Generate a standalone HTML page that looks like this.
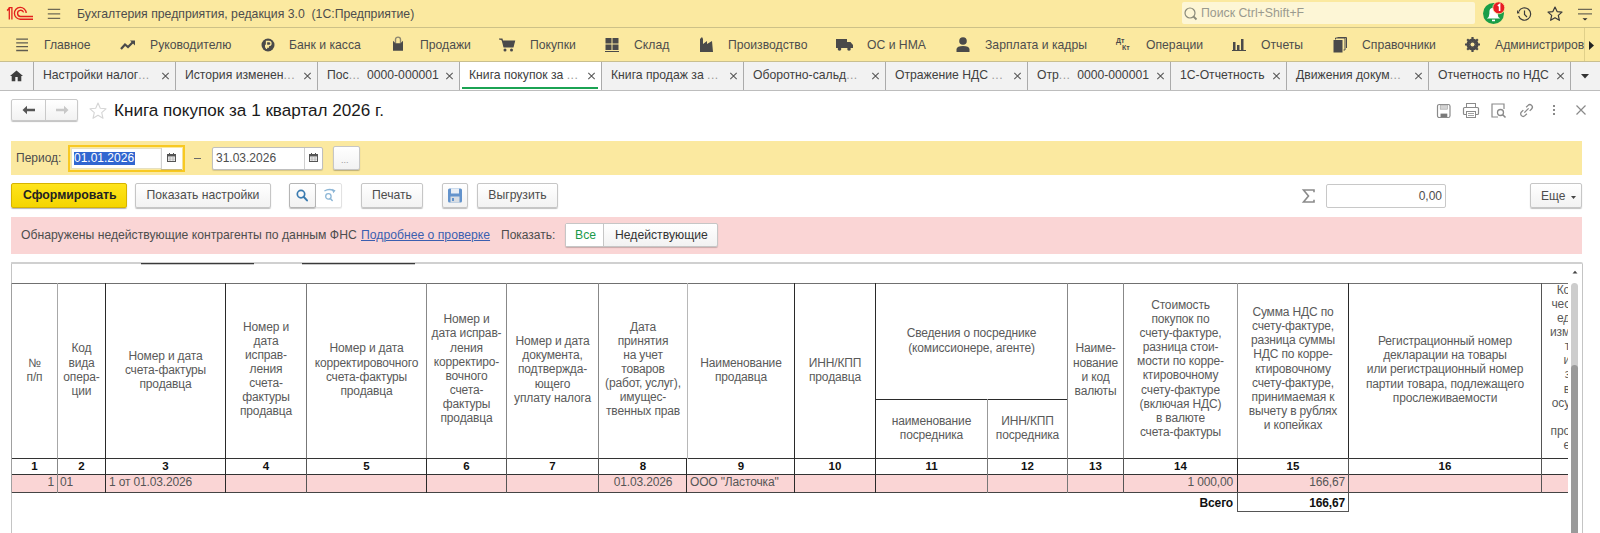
<!DOCTYPE html><html><head><meta charset="utf-8"><title>1C</title><style>
*{margin:0;padding:0;box-sizing:border-box}
html,body{width:1600px;height:533px;overflow:hidden;background:#fff;font-family:"Liberation Sans",sans-serif;color:#4d4d4d;font-size:12px}
.a{position:absolute;white-space:nowrap}
.t{position:absolute;white-space:nowrap;line-height:14px}
svg{position:absolute;overflow:visible}
.btn{position:absolute;border:1px solid #c6c6c6;border-radius:2px;background:linear-gradient(#fff,#f2f2f2);box-shadow:0 1px 1px rgba(0,0,0,.25)}
.hl{position:absolute;height:1px}
.vl{position:absolute;width:1px}
.ht{position:absolute;text-align:center;font-size:12px;letter-spacing:-0.15px;line-height:14.12px;color:#5a5a5a;white-space:nowrap}
.num{position:absolute;text-align:center;font-size:11.5px;font-weight:bold;color:#111;line-height:14px}
.dt{position:absolute;font-size:12px;letter-spacing:-0.15px;color:#555;line-height:14px;white-space:nowrap}
</style></head><body>
<div class="a" style="left:0;top:0;width:1600px;height:27px;background:#FBE9A0"></div>
<div class="a" style="left:0;top:27px;width:1600px;height:1px;background:#cdc187"></div>
<svg style="left:0;top:0" width="40" height="27" viewBox="0 0 40 27">
<path d="M7.2 10.6 L9.4 8.2" stroke="#e3211c" stroke-width="1.6" fill="none"/>
<path d="M9.3 19.6 L9.3 7.6 L11.9 7.6 L11.9 19.6" stroke="#e3211c" stroke-width="1.3" fill="none"/>
<path d="M26.2 13 A5.9 5.9 0 1 0 20.5 19.2 L33 19.2" stroke="#e3211c" stroke-width="1.35" fill="none"/>
<path d="M23.6 12.4 A3.1 3.1 0 1 0 20.5 16.5 L33 16.5" stroke="#e3211c" stroke-width="1.35" fill="none"/>
</svg>
<svg style="left:47px;top:0" width="14" height="27" viewBox="0 0 14 27"><path d="M0.8 9.4 L13.2 9.4 M0.8 13.9 L13.2 13.9 M0.8 18.4 L13.2 18.4" stroke="#6f6a55" stroke-width="1.3"/></svg>
<div class="a" style="left:77px;top:7px;font-size:12.25px;line-height:15px;color:#4d4d4d">Бухгалтерия предприятия, редакция 3.0&nbsp;&nbsp;(1С:Предприятие)</div>
<div class="a" style="left:1182px;top:2px;width:293px;height:22px;background:#fdf6d6;border-radius:2px"></div>
<svg style="left:1184px;top:7px" width="14" height="14" viewBox="0 0 14 14"><circle cx="6" cy="6" r="5" stroke="#8a8a7a" stroke-width="1.2" fill="none"/><path d="M9.5 9.5 L12.5 12.5" stroke="#8a8a7a" stroke-width="1.8"/></svg>
<div class="a" style="left:1201px;top:6px;font-size:12.3px;line-height:15px;color:#9a9a8e">Поиск Ctrl+Shift+F</div>
<svg style="left:1482px;top:1px" width="26" height="26" viewBox="0 0 26 26">
<circle cx="11.5" cy="12.5" r="10.5" fill="#1a9e48"/>
<path d="M4.8 17.6 L18.2 17.6 Q15.6 16 15.6 12.5 L15.6 10.8 A4.1 4.1 0 0 0 7.4 10.8 L7.4 12.5 Q7.4 16 4.8 17.6 Z" fill="#fff"/>
<rect x="10" y="18.6" width="3" height="1.6" fill="#fff"/>
<circle cx="16.8" cy="6.8" r="6" fill="#e81c24" stroke="#fbe9a0" stroke-width="0.8"/>
<path d="M15.8 4.8 L17.6 3.6 L17.6 10" stroke="#fff" stroke-width="1.6" fill="none"/>
</svg>
<svg style="left:1516px;top:6px" width="16" height="16" viewBox="0 0 16 16">
<path d="M2.8 5.5 A6.2 6.2 0 1 1 2.6 10" stroke="#3a3a3a" stroke-width="1.2" fill="none"/>
<path d="M1.2 4 L3.8 7.2 L1.0 7.5 Z" fill="#3a3a3a"/>
<path d="M8.5 4.5 L8.5 8.5 L11 11" stroke="#3a3a3a" stroke-width="1.2" fill="none"/>
</svg>
<svg style="left:1547px;top:6px" width="16" height="16" viewBox="0 0 16 16">
<path d="M8 1 L10.1 5.6 L15 6.1 L11.3 9.4 L12.4 14.3 L8 11.7 L3.6 14.3 L4.7 9.4 L1 6.1 L5.9 5.6 Z" stroke="#3a3a3a" stroke-width="1.2" fill="none" stroke-linejoin="round"/>
</svg>
<svg style="left:1577px;top:6px" width="16" height="16" viewBox="0 0 16 16"><path d="M1 3.3 L15 3.3 M1 7.9 L15 7.9" stroke="#6f6a55" stroke-width="1.3"/><path d="M5.5 12.2 L10.5 12.2 L8 14.6 Z" fill="#2a2a2a"/></svg>
<div class="a" style="left:0;top:28px;width:1600px;height:33px;background:#FBE9A0"></div>
<div class="a" style="left:44px;top:37.5px;font-size:12.2px;line-height:15px;color:#4d4d4d">Главное</div>
<div class="a" style="left:150px;top:37.5px;font-size:12.2px;line-height:15px;color:#4d4d4d">Руководителю</div>
<div class="a" style="left:289px;top:37.5px;font-size:12.2px;line-height:15px;color:#4d4d4d">Банк и касса</div>
<div class="a" style="left:420px;top:37.5px;font-size:12.2px;line-height:15px;color:#4d4d4d">Продажи</div>
<div class="a" style="left:530px;top:37.5px;font-size:12.2px;line-height:15px;color:#4d4d4d">Покупки</div>
<div class="a" style="left:634px;top:37.5px;font-size:12.2px;line-height:15px;color:#4d4d4d">Склад</div>
<div class="a" style="left:728px;top:37.5px;font-size:12.2px;line-height:15px;color:#4d4d4d">Производство</div>
<div class="a" style="left:867px;top:37.5px;font-size:12.2px;line-height:15px;color:#4d4d4d">ОС и НМА</div>
<div class="a" style="left:985px;top:37.5px;font-size:12.2px;line-height:15px;color:#4d4d4d">Зарплата и кадры</div>
<div class="a" style="left:1146px;top:37.5px;font-size:12.2px;line-height:15px;color:#4d4d4d">Операции</div>
<div class="a" style="left:1261px;top:37.5px;font-size:12.2px;line-height:15px;color:#4d4d4d">Отчеты</div>
<div class="a" style="left:1362px;top:37.5px;font-size:12.2px;line-height:15px;color:#4d4d4d">Справочники</div>
<div class="a" style="left:1495px;top:37.5px;font-size:12.2px;line-height:15px;color:#4d4d4d">Администриров</div>
<svg style="left:16px;top:36px" width="13" height="17" viewBox="0 0 13 17"><path d="M0.2 3.2 L12 3.2 M0.2 6.9 L12 6.9 M0.2 10.6 L12 10.6 M0.2 14.5 L12 14.5" stroke="#5f5c50" stroke-width="1.3"/></svg>
<svg style="left:120px;top:40px" width="16" height="10" viewBox="0 0 16 10"><path d="M1 9 L5 4.5 L8 7 L13 2" stroke="#4a4a4a" stroke-width="2.2" fill="none"/><path d="M10 0.5 L15 0.5 L15 5.5 Z" fill="#4a4a4a"/></svg>
<svg style="left:261px;top:38px" width="14" height="14" viewBox="0 0 14 14"><circle cx="7" cy="7" r="6.5" fill="#4a4a4a"/><path d="M5.5 11 L5.5 3.5 L8 3.5 A2 2 0 0 1 8 7.5 L4 7.5 M4 9 L8 9" stroke="#FBE9A0" stroke-width="1.3" fill="none"/></svg>
<svg style="left:392px;top:36px" width="12" height="16" viewBox="0 0 12 16"><path d="M3.5 7.5 L3.5 3.6 A2.5 2.5 0 0 1 8.5 3.6 L8.5 7.5" stroke="#8c8670" stroke-width="1.4" fill="none"/><path d="M1 4.8 L3.5 7.3 L8.5 7.3 L11 4.8 L11 14.7 L1 14.7 Z" fill="#4a4a4a"/></svg>
<svg style="left:499px;top:38px" width="16" height="14" viewBox="0 0 16 14"><path d="M0 1 L3 1 L5 9 L14 9 L15.5 3 L4 3" fill="#4a4a4a" stroke="#4a4a4a" stroke-width="1.2"/><circle cx="6" cy="12" r="1.5" fill="#4a4a4a"/><circle cx="12.5" cy="12" r="1.5" fill="#4a4a4a"/></svg>
<svg style="left:605px;top:38px" width="14" height="14" viewBox="0 0 14 14"><rect x="0.5" y="0" width="6" height="5.5" fill="#4a4a4a"/><rect x="7.5" y="0" width="6" height="5.5" fill="#4a4a4a"/><rect x="0.5" y="6.5" width="6" height="5.5" fill="#4a4a4a"/><rect x="7.5" y="6.5" width="6" height="5.5" fill="#4a4a4a"/><rect x="0" y="13" width="14" height="1" fill="#4a4a4a"/></svg>
<svg style="left:700px;top:37px" width="13" height="15" viewBox="0 0 13 15"><path d="M0 15 L0 2 L2 0 L3 2 L3 7 L7 4 L7 7 L12 4 L13 15 Z" fill="#4a4a4a"/></svg>
<svg style="left:836px;top:39px" width="17" height="12" viewBox="0 0 17 12"><rect x="0" y="0" width="11" height="9" fill="#4a4a4a"/><path d="M11 3 L14.5 3 L17 6 L17 9 L11 9 Z" fill="#4a4a4a"/><circle cx="3.5" cy="10" r="1.8" fill="#4a4a4a"/><circle cx="13" cy="10" r="1.8" fill="#4a4a4a"/></svg>
<svg style="left:956px;top:37px" width="14" height="15" viewBox="0 0 14 15"><circle cx="7" cy="4" r="3.8" fill="#4a4a4a"/><path d="M0.5 15 L0.5 12 Q1 9 7 9 Q13 9 13.5 12 L13.5 15 Z" fill="#4a4a4a"/></svg>
<div class="a" style="left:1116px;top:37px;font-size:7px;line-height:7px;font-weight:bold;color:#4a4a4a">Дт</div><div class="a" style="left:1122px;top:44px;font-size:7px;line-height:7px;font-weight:bold;color:#4a4a4a">Кт</div>
<svg style="left:1232px;top:39px" width="14" height="12" viewBox="0 0 14 12"><rect x="1" y="3" width="2.5" height="8" fill="#4a4a4a"/><rect x="5" y="6" width="2.5" height="5" fill="#4a4a4a"/><rect x="9" y="0" width="2.5" height="11" fill="#4a4a4a"/><rect x="0" y="11" width="14" height="1" fill="#4a4a4a"/></svg>
<svg style="left:1333px;top:37px" width="14" height="16" viewBox="0 0 14 16"><rect x="0.5" y="3" width="9" height="12.5" fill="#4a4a4a"/><path d="M2.5 2.5 L2.5 1 L12 1 L12 13 L10.5 13" stroke="#4a4a4a" stroke-width="1" fill="none"/><path d="M4.5 0.5 L13.5 0.5 L13.5 11" stroke="#4a4a4a" stroke-width="1" fill="none"/></svg>
<svg style="left:1465px;top:37px" width="15" height="15" viewBox="0 0 15 15"><circle cx="7.5" cy="7.5" r="4.5" stroke="#4a4a4a" stroke-width="3" fill="none"/><path d="M7.5 0 L7.5 15 M0 7.5 L15 7.5 M2.2 2.2 L12.8 12.8 M12.8 2.2 L2.2 12.8" stroke="#4a4a4a" stroke-width="2.2"/><circle cx="7.5" cy="7.5" r="2" fill="#FBE9A0"/></svg>
<div class="a" style="left:1584px;top:28px;width:1px;height:33px;background:#e0d08a"></div>
<svg style="left:1589px;top:41px" width="6" height="9" viewBox="0 0 6 9"><path d="M0 0 L5 4.5 L0 9 Z" fill="#222"/></svg>
<div class="a" style="left:0;top:61px;width:1600px;height:29px;background:#f2f2f2"></div>
<div class="a" style="left:0;top:61px;width:1600px;height:1px;background:#c9bf8f"></div>
<div class="a" style="left:0;top:90px;width:1600px;height:1px;background:#bdbdbd"></div>
<div class="a" style="left:459px;top:62px;width:142px;height:28px;background:#fff"></div>
<div class="a" style="left:462px;top:87px;width:136px;height:2px;background:#1ba353"></div>
<div class="a" style="left:33px;top:62px;width:1px;height:28px;background:#ababab"></div>
<div class="a" style="left:175px;top:62px;width:1px;height:28px;background:#ababab"></div>
<div class="a" style="left:317px;top:62px;width:1px;height:28px;background:#ababab"></div>
<div class="a" style="left:459px;top:62px;width:1px;height:28px;background:#ababab"></div>
<div class="a" style="left:601px;top:62px;width:1px;height:28px;background:#ababab"></div>
<div class="a" style="left:743px;top:62px;width:1px;height:28px;background:#ababab"></div>
<div class="a" style="left:885px;top:62px;width:1px;height:28px;background:#ababab"></div>
<div class="a" style="left:1027px;top:62px;width:1px;height:28px;background:#ababab"></div>
<div class="a" style="left:1170px;top:62px;width:1px;height:28px;background:#ababab"></div>
<div class="a" style="left:1286px;top:62px;width:1px;height:28px;background:#ababab"></div>
<div class="a" style="left:1428px;top:62px;width:1px;height:28px;background:#ababab"></div>
<div class="a" style="left:1570px;top:62px;width:1px;height:28px;background:#ababab"></div>
<div class="a" style="left:43px;top:68px;font-size:12.2px;line-height:15px;color:#404040">Настройки налог<span style="letter-spacing:0.45px;color:#9a9a9a">...</span></div>
<svg style="left:161px;top:72px" width="8" height="8" viewBox="0 0 8 8"><path d="M1.3 0.9 L7.7 7.1 M7.7 0.9 L1.3 7.1" stroke="#5a5a5a" stroke-width="1.1"/></svg>
<div class="a" style="left:185px;top:68px;font-size:12.2px;line-height:15px;color:#404040">История изменен<span style="letter-spacing:0.45px;color:#9a9a9a">...</span></div>
<svg style="left:303px;top:72px" width="8" height="8" viewBox="0 0 8 8"><path d="M1.3 0.9 L7.7 7.1 M7.7 0.9 L1.3 7.1" stroke="#5a5a5a" stroke-width="1.1"/></svg>
<div class="a" style="left:327px;top:68px;font-size:12.2px;line-height:15px;color:#404040">Пос<span style="letter-spacing:0.45px;color:#9a9a9a">...</span>&nbsp;&nbsp;0000-000001</div>
<svg style="left:445px;top:72px" width="8" height="8" viewBox="0 0 8 8"><path d="M1.3 0.9 L7.7 7.1 M7.7 0.9 L1.3 7.1" stroke="#5a5a5a" stroke-width="1.1"/></svg>
<div class="a" style="left:469px;top:68px;font-size:12.2px;line-height:15px;color:#404040">Книга покупок за <span style="letter-spacing:0.45px;color:#9a9a9a">...</span></div>
<svg style="left:587px;top:72px" width="8" height="8" viewBox="0 0 8 8"><path d="M1.3 0.9 L7.7 7.1 M7.7 0.9 L1.3 7.1" stroke="#5a5a5a" stroke-width="1.1"/></svg>
<div class="a" style="left:611px;top:68px;font-size:12.2px;line-height:15px;color:#404040">Книга продаж за <span style="letter-spacing:0.45px;color:#9a9a9a">...</span></div>
<svg style="left:729px;top:72px" width="8" height="8" viewBox="0 0 8 8"><path d="M1.3 0.9 L7.7 7.1 M7.7 0.9 L1.3 7.1" stroke="#5a5a5a" stroke-width="1.1"/></svg>
<div class="a" style="left:753px;top:68px;font-size:12.2px;line-height:15px;color:#404040">Оборотно-сальд<span style="letter-spacing:0.45px;color:#9a9a9a">...</span></div>
<svg style="left:871px;top:72px" width="8" height="8" viewBox="0 0 8 8"><path d="M1.3 0.9 L7.7 7.1 M7.7 0.9 L1.3 7.1" stroke="#5a5a5a" stroke-width="1.1"/></svg>
<div class="a" style="left:895px;top:68px;font-size:12.2px;line-height:15px;color:#404040">Отражение НДС <span style="letter-spacing:0.45px;color:#9a9a9a">...</span></div>
<svg style="left:1013px;top:72px" width="8" height="8" viewBox="0 0 8 8"><path d="M1.3 0.9 L7.7 7.1 M7.7 0.9 L1.3 7.1" stroke="#5a5a5a" stroke-width="1.1"/></svg>
<div class="a" style="left:1037px;top:68px;font-size:12.2px;line-height:15px;color:#404040">Отр<span style="letter-spacing:0.45px;color:#9a9a9a">...</span>&nbsp;&nbsp;0000-000001</div>
<svg style="left:1156px;top:72px" width="8" height="8" viewBox="0 0 8 8"><path d="M1.3 0.9 L7.7 7.1 M7.7 0.9 L1.3 7.1" stroke="#5a5a5a" stroke-width="1.1"/></svg>
<div class="a" style="left:1180px;top:68px;font-size:12.2px;line-height:15px;color:#404040">1С-Отчетность</div>
<svg style="left:1272px;top:72px" width="8" height="8" viewBox="0 0 8 8"><path d="M1.3 0.9 L7.7 7.1 M7.7 0.9 L1.3 7.1" stroke="#5a5a5a" stroke-width="1.1"/></svg>
<div class="a" style="left:1296px;top:68px;font-size:12.2px;line-height:15px;color:#404040">Движения докум<span style="letter-spacing:0.45px;color:#9a9a9a">...</span></div>
<svg style="left:1414px;top:72px" width="8" height="8" viewBox="0 0 8 8"><path d="M1.3 0.9 L7.7 7.1 M7.7 0.9 L1.3 7.1" stroke="#5a5a5a" stroke-width="1.1"/></svg>
<div class="a" style="left:1438px;top:68px;font-size:12.2px;line-height:15px;color:#404040">Отчетность по НДС</div>
<svg style="left:1556px;top:72px" width="8" height="8" viewBox="0 0 8 8"><path d="M1.3 0.9 L7.7 7.1 M7.7 0.9 L1.3 7.1" stroke="#5a5a5a" stroke-width="1.1"/></svg>
<svg style="left:9.5px;top:70px" width="13" height="12" viewBox="0 0 13 12"><path d="M6.5 0.5 L13 5.9 L11.3 5.9 L11.3 11.3 L7.7 11.3 L7.7 7 L5.3 7 L5.3 11.3 L1.7 11.3 L1.7 5.9 L0 5.9 Z" fill="#3f3f3f"/></svg>
<svg style="left:1581px;top:74px" width="8" height="5" viewBox="0 0 8 5"><path d="M0 0 L8 0 L4 4.5 Z" fill="#333"/></svg>
<div class="btn" style="left:11px;top:99px;width:67px;height:22px;border-color:#c9c9c9"></div>
<div class="a" style="left:45px;top:100px;width:1px;height:20px;background:#c9c9c9"></div>
<svg style="left:22px;top:105px" width="14" height="10" viewBox="0 0 14 10"><path d="M0.5 5 L5 0.8 L5 3.8 L13 3.8 L13 6.2 L5 6.2 L5 9.2 Z" fill="#555"/></svg>
<svg style="left:55px;top:105px" width="14" height="10" viewBox="0 0 14 10"><path d="M13.5 5 L9 0.8 L9 3.8 L1 3.8 L1 6.2 L9 6.2 L9 9.2 Z" fill="#c8c8c8"/></svg>
<svg style="left:89px;top:102px" width="18" height="18" viewBox="0 0 18 18"><path d="M9 1 L11.3 6.3 L17 6.8 L12.7 10.6 L14 16.3 L9 13.3 L4 16.3 L5.3 10.6 L1 6.8 L6.7 6.3 Z" stroke="#d5d5d5" stroke-width="1.1" fill="none" stroke-linejoin="round"/></svg>
<div class="a" style="left:114px;top:101px;font-size:17.1px;line-height:19px;color:#1a1a1a">Книга покупок за 1 квартал 2026 г.</div>
<svg style="left:1436px;top:103px" width="16" height="16" viewBox="0 0 16 16"><rect x="1.5" y="1.5" width="12.5" height="13" rx="1.8" stroke="#8a8a8a" stroke-width="1.2" fill="none"/><rect x="4.2" y="2" width="7.3" height="4.2" fill="#d4d4d4" stroke="#a0a0a0" stroke-width="0.6"/><rect x="4.5" y="10.6" width="6.8" height="3.4" fill="#7a7a7a"/></svg>
<svg style="left:1463px;top:103px" width="16" height="15" viewBox="0 0 16 15"><rect x="3.5" y="0.5" width="9" height="4" stroke="#8a8a8a" stroke-width="1" fill="none"/><rect x="0.5" y="4.5" width="15" height="7" rx="1" stroke="#8a8a8a" stroke-width="1.2" fill="none"/><rect x="3.5" y="8.5" width="9" height="6" stroke="#8a8a8a" stroke-width="1" fill="#fff"/><path d="M5 10.5 L11 10.5 M5 12.5 L11 12.5" stroke="#8a8a8a" stroke-width="0.8"/></svg>
<svg style="left:1491px;top:103px" width="16" height="15" viewBox="0 0 16 15"><path d="M7 14 L1 14 L1 1 L13 1 L13 6" stroke="#8a8a8a" stroke-width="1.2" fill="none"/><circle cx="9.5" cy="9.5" r="3" stroke="#8a8a8a" stroke-width="1.3" fill="none"/><path d="M11.7 11.7 L14.5 14.5" stroke="#8a8a8a" stroke-width="1.6"/></svg>
<svg style="left:1518px;top:102px" width="17" height="17" viewBox="0 0 17 17"><g transform="rotate(-45 8.5 8.5)"><path d="M6.5 6 L3.8 6 A2.5 2.5 0 0 0 3.8 11 L6.5 11" stroke="#8a8a8a" stroke-width="1.3" fill="none"/><path d="M10.5 6 L13.2 6 A2.5 2.5 0 0 1 13.2 11 L10.5 11" stroke="#8a8a8a" stroke-width="1.3" fill="none"/><path d="M5.5 8.5 L11.5 8.5" stroke="#8a8a8a" stroke-width="1.3"/></g></svg>
<div class="a" style="left:1553px;top:105px;width:2px;height:2px;background:#8a8a8a"></div><div class="a" style="left:1553px;top:109px;width:2px;height:2px;background:#8a8a8a"></div><div class="a" style="left:1553px;top:113px;width:2px;height:2px;background:#8a8a8a"></div>
<svg style="left:1576px;top:105px" width="10" height="10" viewBox="0 0 10 10"><path d="M0.5 0.5 L9.5 9.5 M9.5 0.5 L0.5 9.5" stroke="#8a8a8a" stroke-width="1.2"/></svg>
<div class="a" style="left:11px;top:141px;width:1571px;height:34px;background:#FBE9A0"></div>
<div class="a" style="left:16px;top:151px;font-size:12px;line-height:15px;color:#4d4d4d">Период:</div>
<div class="a" style="left:68px;top:145px;width:117px;height:27px;border:2px solid #f8c922;background:#fbe9a0"></div>
<div class="a" style="left:71px;top:148px;width:111px;height:21px;background:#fff;border:1px solid #e6e0c0"></div>
<div class="a" style="left:161px;top:148px;width:21px;height:21px;background:#fff;border-left:1px solid #d0d0d0;box-shadow:0 1px 1px rgba(0,0,0,.2)"></div>
<div class="a" style="left:74px;top:152px;width:61px;height:13px;background:#3166d0"></div>
<div class="a" style="left:74px;top:151px;font-size:12px;line-height:15px;color:#fff">01.01.2026</div>
<svg style="left:167px;top:153px" width="9" height="9" viewBox="0 0 9 9"><rect x="0.5" y="1.5" width="8" height="7" stroke="#555" stroke-width="1" fill="none"/><rect x="0.5" y="1.5" width="8" height="2" fill="#555"/><path d="M2.5 0 L2.5 2 M6.5 0 L6.5 2" stroke="#555" stroke-width="1"/><path d="M1 5 L8 5 M1 6.8 L8 6.8 M3 4 L3 8 M6 4 L6 8" stroke="#888" stroke-width="0.5"/></svg>
<div class="a" style="left:194px;top:158px;width:7px;height:1px;background:#6a6a6a"></div>
<div class="btn" style="left:212px;top:147px;width:111px;height:23px;background:#fff;border-color:#bfbfbf;box-shadow:0 1px 1px rgba(0,0,0,.15)"></div>
<div class="a" style="left:304px;top:148px;width:1px;height:21px;background:#cfcfcf"></div>
<div class="a" style="left:216px;top:151px;font-size:12px;line-height:15px;color:#4d4d4d">31.03.2026</div>
<svg style="left:309px;top:153px" width="9" height="9" viewBox="0 0 9 9"><rect x="0.5" y="1.5" width="8" height="7" stroke="#555" stroke-width="1" fill="none"/><rect x="0.5" y="1.5" width="8" height="2" fill="#555"/><path d="M2.5 0 L2.5 2 M6.5 0 L6.5 2" stroke="#555" stroke-width="1"/><path d="M1 5 L8 5 M1 6.8 L8 6.8 M3 4 L3 8 M6 4 L6 8" stroke="#888" stroke-width="0.5"/></svg>
<div class="btn" style="left:333px;top:146px;width:27px;height:24px"></div>
<div class="a" style="left:341px;top:155px;font-size:9px;line-height:10px;color:#999">...</div>
<div class="a" style="left:11px;top:183px;width:116px;height:25px;border:1px solid #d6b300;border-radius:2px;background:linear-gradient(#ffe41c,#f4d500);box-shadow:0 1px 1px rgba(0,0,0,.3)"></div>
<div class="a" style="left:23px;top:188px;font-size:12.3px;font-weight:bold;line-height:15px;color:#222">Сформировать</div>
<div class="btn" style="left:135px;top:183px;width:136px;height:25px"></div>
<div class="a" style="left:135px;top:188px;width:136px;text-align:center;font-size:12.2px;line-height:15px;color:#4d4d4d">Показать настройки</div>
<div class="btn" style="left:289px;top:183px;width:27px;height:25px;border-color:#b5b5b5"></div>
<div class="btn" style="left:315px;top:183px;width:27px;height:25px;border-color:#e2e2e2;box-shadow:0 1px 1px rgba(0,0,0,.08);background:#fff"></div>
<div class="a" style="left:315px;top:184px;width:1px;height:23px;background:#b5b5b5"></div>
<svg style="left:295px;top:188px" width="14" height="15" viewBox="0 0 14 15"><circle cx="6" cy="6.1" r="3.7" stroke="#3a7bb0" stroke-width="1.7" fill="none"/><path d="M8.6 8.8 L12 12.4" stroke="#3a7bb0" stroke-width="2" stroke-linecap="round"/></svg>
<svg style="left:322px;top:187px" width="16" height="16" viewBox="0 0 16 16"><circle cx="6.4" cy="9.4" r="2.7" stroke="#8cb6d6" stroke-width="1.3" fill="none"/><path d="M8.3 11.4 L10.2 13.4" stroke="#8cb6d6" stroke-width="1.5" stroke-linecap="round"/><path d="M2.4 4 Q7 1.2 11.5 3.6" stroke="#8cb6d6" stroke-width="1.3" fill="none"/><path d="M10 1.8 L13.6 3.4 L11.2 6.2 Z" fill="#8cb6d6"/></svg>
<div class="btn" style="left:361px;top:183px;width:62px;height:25px"></div>
<div class="a" style="left:361px;top:188px;width:62px;text-align:center;font-size:12.2px;line-height:15px;color:#4d4d4d">Печать</div>
<div class="btn" style="left:442px;top:183px;width:26px;height:25px"></div>
<svg style="left:448px;top:188px" width="14" height="15" viewBox="0 0 14 15"><rect x="0" y="0.5" width="14" height="14" rx="1.5" fill="#6393cc"/><rect x="3" y="0.5" width="8" height="5" fill="#e8eef5"/><rect x="2.5" y="8.5" width="9" height="6" fill="#d8dde3"/><rect x="4" y="10" width="2" height="3" fill="#6393cc"/></svg>
<div class="btn" style="left:477px;top:183px;width:81px;height:25px"></div>
<div class="a" style="left:477px;top:188px;width:81px;text-align:center;font-size:12.2px;line-height:15px;color:#4d4d4d">Выгрузить</div>
<svg style="left:1302px;top:189px" width="13" height="14" viewBox="0 0 13 14"><path d="M12 3.2 L12 1 L1.5 1 L6.5 7 L1.5 13 L12 13 L12 10.8" stroke="#8a8a8a" stroke-width="1.6" fill="none" stroke-linejoin="miter"/></svg>
<div class="a" style="left:1326px;top:184px;width:120px;height:24px;border:1px solid #c8c8c8;border-radius:2px;background:#fff"></div>
<div class="a" style="left:1326px;top:188.7px;width:116px;text-align:right;font-size:12px;line-height:15px;color:#4d4d4d">0,00</div>
<div class="btn" style="left:1530px;top:183px;width:52px;height:25px"></div>
<div class="a" style="left:1541px;top:188.7px;font-size:12px;line-height:15px;color:#4d4d4d">Еще</div>
<svg style="left:1571px;top:196px" width="5" height="3" viewBox="0 0 5 3"><path d="M0 0 L5 0 L2.5 3 Z" fill="#444"/></svg>
<div class="a" style="left:11px;top:217px;width:1571px;height:37px;background:#fad5d5"></div>
<div class="a" style="left:21px;top:228px;font-size:12.2px;line-height:15px;color:#4d4d4d">Обнаружены недействующие контрагенты по данным ФНС</div>
<div class="a" style="left:361px;top:228px;font-size:12.2px;line-height:15px;color:#3b5fb0;text-decoration:underline">Подробнее о проверке</div>
<div class="a" style="left:501px;top:228px;font-size:12px;line-height:15px;color:#4d4d4d">Показать:</div>
<div class="a" style="left:565px;top:223px;width:153px;height:24px;border:1px solid #c6c6c6;border-radius:2px;background:linear-gradient(#fff,#f2f2f2);box-shadow:0 1px 1px rgba(0,0,0,.2)"></div>
<div class="a" style="left:566px;top:224px;width:37px;height:22px;background:#fff"></div>
<div class="a" style="left:603px;top:224px;width:1px;height:22px;background:#c6c6c6"></div>
<div class="a" style="left:575px;top:228px;font-size:12.2px;line-height:15px;color:#1a9a4a">Все</div>
<div class="a" style="left:615px;top:228px;font-size:12.2px;line-height:15px;color:#333">Недействующие</div>
<div class="a" style="left:11px;top:262px;width:1572px;height:280px;border:1px solid #c4c4c4;border-top:2px solid #d0d0d0;border-radius:0 2px 0 0;background:#fff"></div>
<div class="a" style="left:141px;top:263px;width:113px;height:1px;background:#3a3a3a"></div><div class="a" style="left:141px;top:264px;width:113px;height:1px;background:#c8c8c8"></div>
<div class="a" style="left:302px;top:263px;width:113px;height:1px;background:#3a3a3a"></div><div class="a" style="left:302px;top:264px;width:113px;height:1px;background:#c8c8c8"></div>
<div class="a" style="left:0;top:0;width:1568px;height:533px;overflow:hidden">
<div class="a" style="left:11px;top:474px;width:1557px;height:18px;background:#fad5d5"></div>
<div class="a" style="left:11px;top:283px;width:1558px;height:1px;background:#707070"></div>
<div class="a" style="left:875px;top:399px;width:193px;height:1px;background:#2a2a2a"></div>
<div class="a" style="left:11px;top:458px;width:1558px;height:1px;background:#333"></div>
<div class="a" style="left:11px;top:474px;width:1558px;height:1px;background:#333"></div>
<div class="a" style="left:11px;top:492px;width:1558px;height:1px;background:#444"></div>
<div class="a" style="left:11px;top:283px;width:1px;height:176px;background:#a0a0a0"></div>
<div class="a" style="left:57px;top:283px;width:1px;height:176px;background:#a8a8a8"></div>
<div class="a" style="left:105px;top:283px;width:1px;height:176px;background:#2a2a2a"></div>
<div class="a" style="left:225px;top:283px;width:1px;height:176px;background:#2a2a2a"></div>
<div class="a" style="left:306px;top:283px;width:1px;height:176px;background:#777"></div>
<div class="a" style="left:426px;top:283px;width:1px;height:176px;background:#888"></div>
<div class="a" style="left:506px;top:283px;width:1px;height:176px;background:#888"></div>
<div class="a" style="left:598px;top:283px;width:1px;height:176px;background:#888"></div>
<div class="a" style="left:687px;top:283px;width:1px;height:176px;background:#b8b8b8"></div>
<div class="a" style="left:794px;top:283px;width:1px;height:176px;background:#2a2a2a"></div>
<div class="a" style="left:875px;top:283px;width:1px;height:176px;background:#2a2a2a"></div>
<div class="a" style="left:1067px;top:283px;width:1px;height:176px;background:#888"></div>
<div class="a" style="left:1123px;top:283px;width:1px;height:176px;background:#888"></div>
<div class="a" style="left:1237px;top:283px;width:1px;height:176px;background:#999"></div>
<div class="a" style="left:1348px;top:283px;width:1px;height:176px;background:#2a2a2a"></div>
<div class="a" style="left:1541px;top:283px;width:1px;height:176px;background:#555"></div>
<div class="a" style="left:987px;top:399px;width:1px;height:60px;background:#999"></div>
<div class="a" style="left:11px;top:458px;width:1px;height:35px;background:#a0a0a0"></div>
<div class="a" style="left:57px;top:458px;width:1px;height:35px;background:#888"></div>
<div class="a" style="left:105px;top:458px;width:1px;height:35px;background:#2a2a2a"></div>
<div class="a" style="left:225px;top:458px;width:1px;height:35px;background:#2a2a2a"></div>
<div class="a" style="left:306px;top:458px;width:1px;height:35px;background:#555"></div>
<div class="a" style="left:426px;top:458px;width:1px;height:35px;background:#2a2a2a"></div>
<div class="a" style="left:506px;top:458px;width:1px;height:35px;background:#555"></div>
<div class="a" style="left:598px;top:458px;width:1px;height:35px;background:#555"></div>
<div class="a" style="left:686px;top:458px;width:1px;height:35px;background:#2a2a2a"></div>
<div class="a" style="left:794px;top:458px;width:1px;height:35px;background:#2a2a2a"></div>
<div class="a" style="left:875px;top:458px;width:1px;height:35px;background:#2a2a2a"></div>
<div class="a" style="left:987px;top:458px;width:1px;height:35px;background:#777"></div>
<div class="a" style="left:1067px;top:458px;width:1px;height:35px;background:#777"></div>
<div class="a" style="left:1123px;top:458px;width:1px;height:35px;background:#555"></div>
<div class="a" style="left:1237px;top:458px;width:1px;height:35px;background:#2a2a2a"></div>
<div class="a" style="left:1348px;top:458px;width:1px;height:35px;background:#555"></div>
<div class="a" style="left:1541px;top:458px;width:1px;height:35px;background:#555"></div>
<div class="a" style="left:1237px;top:511px;width:112px;height:1px;background:#555"></div>
<div class="a" style="left:1237px;top:492px;width:1px;height:20px;background:#555"></div>
<div class="a" style="left:1348px;top:492px;width:1px;height:20px;background:#555"></div>
<div class="ht" style="left:12px;top:355.96px;width:45px;line-height:14.12px">№<br>п/п</div>
<div class="ht" style="left:58px;top:341.42px;width:47px;line-height:14.12px">Код<br>вида<br>опера-<br>ции</div>
<div class="ht" style="left:106px;top:348.69px;width:119px;line-height:14.12px">Номер и дата<br>счета-фактуры<br>продавца</div>
<div class="ht" style="left:226px;top:319.61px;width:80px;line-height:14.12px">Номер и<br>дата<br>исправ-<br>ления<br>счета-<br>фактуры<br>продавца</div>
<div class="ht" style="left:307px;top:341.42px;width:119px;line-height:14.12px">Номер и дата<br>корректировочного<br>счета-фактуры<br>продавца</div>
<div class="ht" style="left:427px;top:312.34px;width:79px;line-height:14.12px">Номер и<br>дата исправ-<br>ления<br>корректиро-<br>вочного<br>счета-<br>фактуры<br>продавца</div>
<div class="ht" style="left:507px;top:334.15px;width:91px;line-height:14.12px">Номер и дата<br>документа,<br>подтвержда-<br>ющего<br>уплату налога</div>
<div class="ht" style="left:599px;top:319.61px;width:88px;line-height:14.12px">Дата<br>принятия<br>на учет<br>товаров<br>(работ, услуг),<br>имущес-<br>твенных прав</div>
<div class="ht" style="left:688px;top:355.96px;width:106px;line-height:14.12px">Наименование<br>продавца</div>
<div class="ht" style="left:795px;top:355.96px;width:80px;line-height:14.12px">ИНН/КПП<br>продавца</div>
<div class="ht" style="left:1068px;top:341.42px;width:55px;line-height:14.12px">Наиме-<br>нование<br>и код<br>валюты</div>
<div class="ht" style="left:1124px;top:297.80px;width:113px;line-height:14.12px">Стоимость<br>покупок по<br>счету-фактуре,<br>разница стои-<br>мости по корре-<br>ктировочному<br>счету-фактуре<br>(включая НДС)<br>в валюте<br>счета-фактуры</div>
<div class="ht" style="left:1238px;top:305.07px;width:110px;line-height:14.12px">Сумма НДС по<br>счету-фактуре,<br>разница суммы<br>НДС по корре-<br>ктировочному<br>счету-фактуре,<br>принимаемая к<br>вычету в рублях<br>и копейках</div>
<div class="ht" style="left:1349px;top:334.15px;width:192px;line-height:14.12px">Регистрационный номер<br>декларации на товары<br>или регистрационный номер<br>партии товара, подлежащего<br>прослеживаемости</div>
<div class="ht" style="left:876px;top:326.46px;width:191px;line-height:14.12px">Сведения о посреднике<br>(комиссионере, агенте)</div>
<div class="ht" style="left:876px;top:413.96px;width:111px;line-height:14.12px">наименование<br>посредника</div>
<div class="ht" style="left:988px;top:413.96px;width:79px;line-height:14.12px">ИНН/КПП<br>посредника</div>
<div class="ht" style="left:1500px;top:282.74px;width:70px;text-align:right;line-height:14.12px">Ко<br>чес<br>ед<br>изм<br>т<br>и<br>з<br>в<br>осу<br><br>про<br>е</div>
<div class="num" style="left:12px;top:459px;width:45px">1</div>
<div class="num" style="left:58px;top:459px;width:47px">2</div>
<div class="num" style="left:106px;top:459px;width:119px">3</div>
<div class="num" style="left:226px;top:459px;width:80px">4</div>
<div class="num" style="left:307px;top:459px;width:119px">5</div>
<div class="num" style="left:427px;top:459px;width:79px">6</div>
<div class="num" style="left:507px;top:459px;width:91px">7</div>
<div class="num" style="left:599px;top:459px;width:88px">8</div>
<div class="num" style="left:688px;top:459px;width:106px">9</div>
<div class="num" style="left:795px;top:459px;width:80px">10</div>
<div class="num" style="left:876px;top:459px;width:111px">11</div>
<div class="num" style="left:988px;top:459px;width:79px">12</div>
<div class="num" style="left:1068px;top:459px;width:55px">13</div>
<div class="num" style="left:1124px;top:459px;width:113px">14</div>
<div class="num" style="left:1238px;top:459px;width:110px">15</div>
<div class="num" style="left:1349px;top:459px;width:192px">16</div>
<div class="dt" style="left:12px;top:474.8px;width:42px;text-align:right">1</div>
<div class="dt" style="left:60px;top:474.8px">01</div>
<div class="dt" style="left:109px;top:474.8px">1 от 01.03.2026</div>
<div class="dt" style="left:599px;top:474.8px;width:88px;text-align:center">01.03.2026</div>
<div class="dt" style="left:690px;top:474.8px">ООО "Ласточка"</div>
<div class="dt" style="left:1123px;top:474.8px;width:110px;text-align:right">1 000,00</div>
<div class="dt" style="left:1237px;top:474.8px;width:108px;text-align:right">166,67</div>
<div class="dt" style="left:1123px;top:495.5px;width:110px;text-align:right;font-weight:bold;color:#111">Всего</div>
<div class="dt" style="left:1237px;top:495.5px;width:108px;text-align:right;font-weight:bold;color:#111">166,67</div>
</div>
<svg style="left:1572px;top:270px" width="6" height="4" viewBox="0 0 6 4"><path d="M0.5 3.5 L5.5 3.5 L3 0.8 Z" fill="#444"/></svg>
<div class="a" style="left:1571px;top:283px;width:7px;height:260px;background:#cdcdcd;border-radius:3.5px 3.5px 0 0"></div>
<div class="a" style="left:1571px;top:365px;width:7px;height:180px;background:#9a9a9a;border-radius:3.5px 3.5px 0 0"></div>
</body></html>
